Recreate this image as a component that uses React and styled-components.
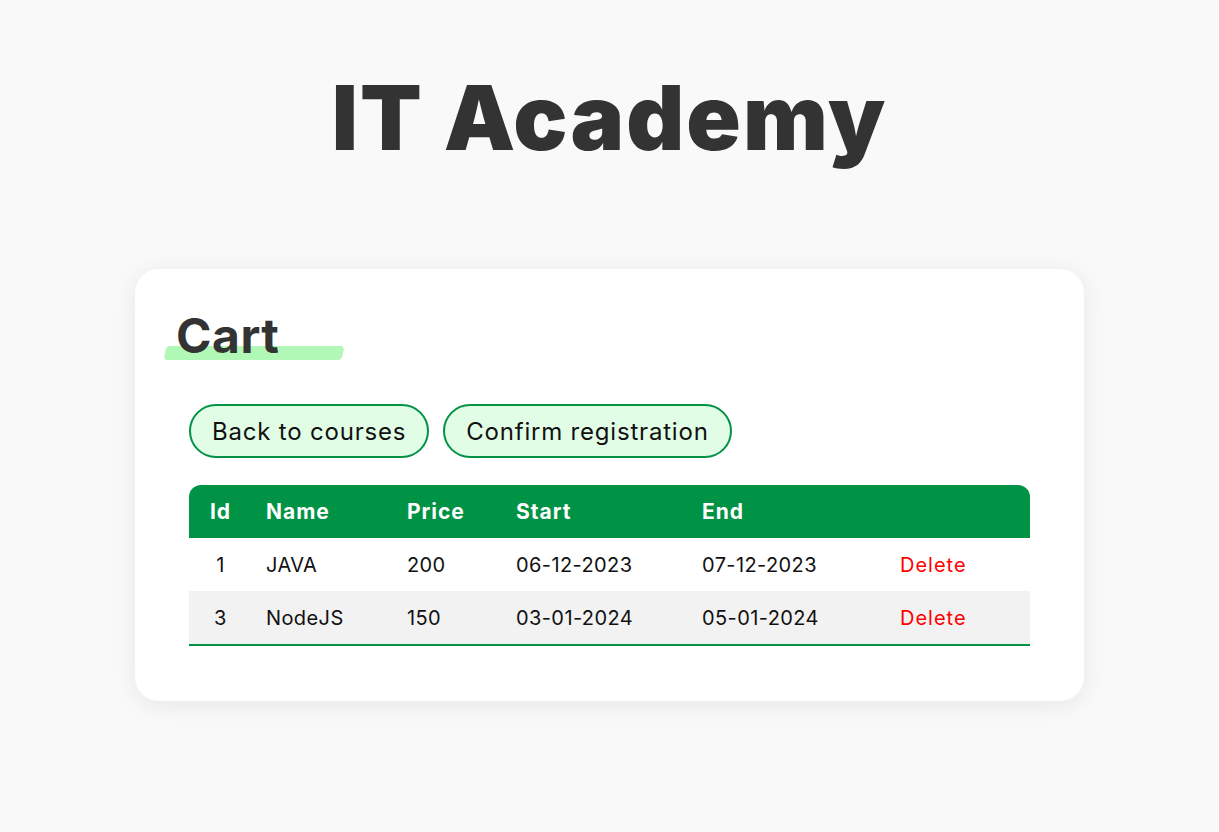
import React from 'react'
import styled, { createGlobalStyle } from 'styled-components';

const GlobalStyle = createGlobalStyle`
  body {
    margin: 0;
    background: #f9f9f9;
    font-family: Inter, "Liberation Sans", sans-serif;
    color: #111111;
  }
`;

const courses = [
  { id: 1, name: 'JAVA', price: 200, start: '06-12-2023', end: '07-12-2023' },
  { id: 3, name: 'NodeJS', price: 150, start: '03-01-2024', end: '05-01-2024' },
];

const App = () => {
  return (
    <>
      <GlobalStyle />
      <PageWrapper>
        <LogoTitle>IT Academy</LogoTitle>

        <CartCard>
          <CartTitle>Cart</CartTitle>

          <ButtonRow>
            <PillButton>Back to courses</PillButton>
            <PillButton>Confirm registration</PillButton>
          </ButtonRow>

          <CartTable>
            <colgroup>
              <col style={{ width: 63 }} />
              <col style={{ width: 141 }} />
              <col style={{ width: 109 }} />
              <col style={{ width: 186 }} />
              <col style={{ width: 198 }} />
              <col style={{ width: 144 }} />
            </colgroup>
            <thead>
              <tr>
                <HeadCell center>Id</HeadCell>
                <HeadCell>Name</HeadCell>
                <HeadCell>Price</HeadCell>
                <HeadCell>Start</HeadCell>
                <HeadCell>End</HeadCell>
                <HeadCell></HeadCell>
              </tr>
            </thead>
            <tbody>
              {courses.map((c, i) => (
                <BodyRow key={c.id} striped={i % 2 === 1}>
                  <BodyCell center>{c.id}</BodyCell>
                  <BodyCell>{c.name}</BodyCell>
                  <BodyCell>{c.price}</BodyCell>
                  <BodyCell>{c.start}</BodyCell>
                  <BodyCell>{c.end}</BodyCell>
                  <BodyCell>
                    <DeleteLink>Delete</DeleteLink>
                  </BodyCell>
                </BodyRow>
              ))}
            </tbody>
          </CartTable>
        </CartCard>
      </PageWrapper>
    </>
  )
}

const PageWrapper = styled.div`
  width: 100%;
  min-height: 100vh;
  display: flex;
  flex-direction: column;
  align-items: center;
  padding-top: 68px;
  box-sizing: border-box;
`;

const LogoTitle = styled.h1`
  margin: 0 0 101px;
  font-size: 90px;
  line-height: 100px;
  font-weight: 900;
  color: #333333;
  letter-spacing: 2px;
`;

const CartCard = styled.div`
  width: 949px;
  box-sizing: border-box;
  background: #ffffff;
  border-radius: 24px;
  box-shadow: 0 4px 24px rgba(0, 0, 0, 0.08);
  padding: 43px 54px 55px;
  display: flex;
  flex-direction: column;
`;

const CartTitle = styled.h2`
  position: relative;
  isolation: isolate;
  align-self: flex-start;
  margin: 0 0 44px -13px;
  font-size: 48px;
  line-height: 48px;
  font-weight: 700;
  color: #333333;
  letter-spacing: 0.5px;

  &::after {
    content: '';
    position: absolute;
    z-index: -1;
    left: -11px;
    bottom: 0;
    width: 178px;
    height: 14px;
    background: #b1f7b6;
    border-radius: 4px;
    transform: skewX(-12deg);
  }
`;

const ButtonRow = styled.div`
  display: flex;
  gap: 14px;
  margin-bottom: 27px;
`;

const PillButton = styled.button`
  height: 54px;
  padding: 0 21px;
  border: 2px solid #009245;
  border-radius: 27px;
  background: #e2fde5;
  font-family: inherit;
  font-size: 24px;
  letter-spacing: 0.8px;
  color: #111111;
  cursor: pointer;
`;

const CartTable = styled.table`
  width: 841px;
  table-layout: fixed;
  border-collapse: separate;
  border-spacing: 0;
  font-size: 20px;

  thead tr th:first-child { border-top-left-radius: 12px; }
  thead tr th:last-child { border-top-right-radius: 12px; }
  tbody tr:last-child td { border-bottom: 2px solid #009245; }
`;

const HeadCell = styled.th`
  height: 53px;
  padding: 0 14px;
  background: #009245;
  color: #ffffff;
  font-size: 21px;
  font-weight: 700;
  letter-spacing: 1px;
  text-align: ${props => (props.center ? 'center' : 'left')};
`;

const BodyRow = styled.tr`
  background: ${props => (props.striped ? '#f2f2f2' : '#ffffff')};

  & + & td {
    border-top: 1px solid #dddddd;
  }
`;

const BodyCell = styled.td`
  height: 53px;
  padding: 0 14px;
  color: #111111;
  letter-spacing: 0.4px;
  text-align: ${props => (props.center ? 'center' : 'left')};
`;

const DeleteLink = styled.span`
  color: #ff0000;
  letter-spacing: 1px;
  cursor: pointer;
`;

export default App
